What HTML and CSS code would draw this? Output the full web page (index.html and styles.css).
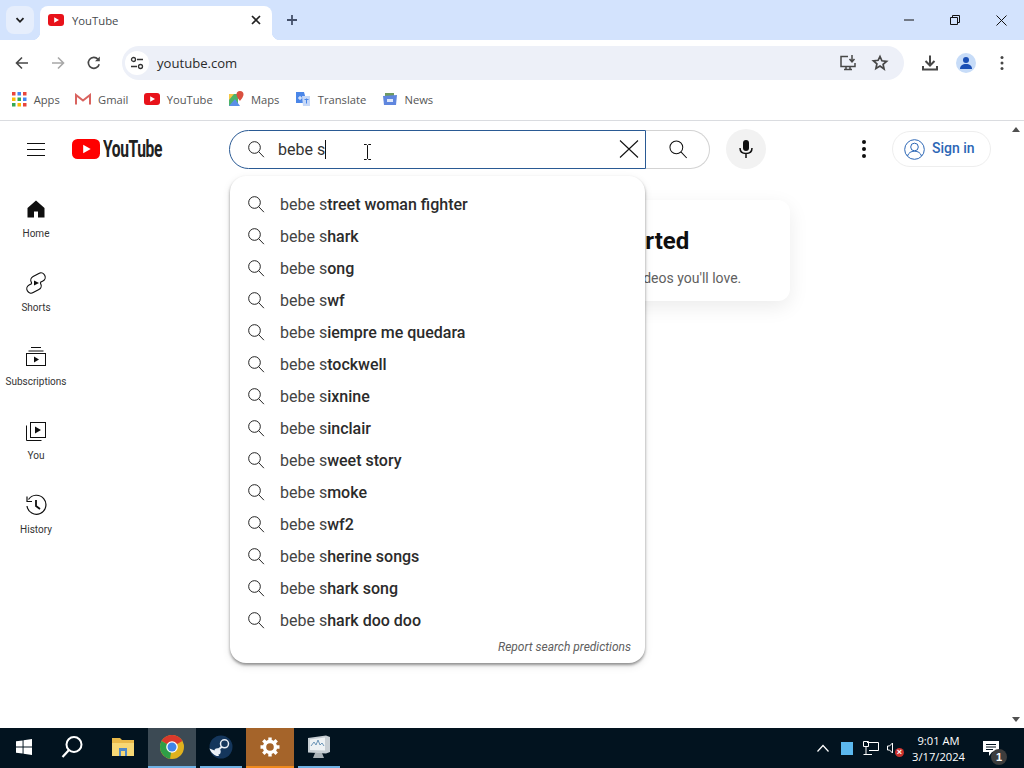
FILE: index.html
```html
<!DOCTYPE html>
<html lang="en">
<head>
<meta charset="utf-8">
<title>YouTube</title>
<link rel="stylesheet" href="styles.css">
</head>
<body>
<svg class="defs" width="0" height="0" aria-hidden="true">
  <symbol id="mag" viewBox="0 0 24 24"><path d="M10.2 3.2a7 7 0 1 0 0 14 7 7 0 0 0 0-14zM15.2 15.2l6.3 6.6" fill="none" stroke="currentColor" stroke-width="1.1"/></symbol>
  <symbol id="ytfav" viewBox="0 0 16 12"><rect width="16" height="12" rx="3" fill="#e8121a"/><path d="M6.2 3.2 11 6l-4.800 2.800z" fill="#fff"/></symbol>
</svg>

<div class="titlebar">
  <div class="tabsearch"><svg width="12" height="12" viewBox="0 0 12 12"><path d="M2.500 4.200 6 7.800l3.500-3.600" fill="none" stroke="#1f1f1f" stroke-width="1.800"/></svg></div>
  <div class="tab">
    <svg class="tabfav" width="16" height="12"><use href="#ytfav"/></svg>
    <span class="tabtitle">YouTube</span>
    <svg width="10" height="10" viewBox="0 0 10 10"><path d="M1 1l8 8M9 1l-8 8" stroke="#222" stroke-width="1.700"/></svg>
  </div>
  <div class="newtab"><svg width="12" height="12" viewBox="0 0 12 12"><path d="M6 1v10M1 6h10" stroke="#44506a" stroke-width="1.800"/></svg></div>
  <div class="winctl">
    <div class="winbtn"><svg width="10" height="10" viewBox="0 0 10 10"><path d="M0 5h10" stroke="#111" stroke-width="1"/></svg></div>
    <div class="winbtn"><svg width="10" height="10" viewBox="0 0 10 10"><path d="M.5 2.500h7v7h-7zM2.500 2.500v-2h7v7h-2" fill="none" stroke="#111"/></svg></div>
    <div class="winbtn"><svg width="11" height="11" viewBox="0 0 11 11"><path d="M.5.500l10 10M10.500.500l-10 10" stroke="#111"/></svg></div>
  </div>
</div>

<div class="toolbar">
  <div class="navbtn"><svg width="16" height="16" viewBox="0 0 16 16"><path d="M14 8H2.500M8 2.500 2.500 8 8 13.500" fill="none" stroke="#474747" stroke-width="1.600"/></svg></div>
  <div class="navbtn"><svg width="16" height="16" viewBox="0 0 16 16"><path d="M2 8h11.500M8 2.500 13.500 8 8 13.500" fill="none" stroke="#a8a8a8" stroke-width="1.600"/></svg></div>
  <div class="navbtn"><svg width="16" height="16" viewBox="0 0 16 16"><path d="M13.200 9.200A5.500 5.500 0 1 1 12 4.200" fill="none" stroke="#474747" stroke-width="1.600"/><path d="M13.800 1.500v4.800H9z" fill="#474747"/></svg></div>
  <div class="omnibox">
    <div class="siteinfo"><svg width="14" height="14" viewBox="0 0 14 14"><circle cx="3.500" cy="3.500" r="2" fill="none" stroke="#333" stroke-width="1.300"/><path d="M7 3.500h6M1 10.500h6" stroke="#333" stroke-width="1.400"/><circle cx="10.500" cy="10.500" r="2" fill="none" stroke="#333" stroke-width="1.300"/></svg></div>
    <span class="url">youtube.com</span>
    <div class="omniright">
      <svg width="18" height="18" viewBox="0 0 18 18"><path d="M9 2.500H2v10h14V9M5 15.500h8M7 13v2.500M11 13v2.500" fill="none" stroke="#474747" stroke-width="1.500"/><path d="M13 1v6M10.500 5 13 7.800 15.500 5" fill="none" stroke="#474747" stroke-width="1.500"/></svg>
      <svg width="18" height="18" viewBox="0 0 18 18"><path d="M9 2.500l1.900 4.300 4.700.5-3.500 3.100 1 4.600L9 12.100l-4.100 2.400 1-4.600-3.500-3.100 4.700-.5z" fill="none" stroke="#474747" stroke-width="1.700"/></svg>
    </div>
  </div>
  <div class="navbtn firstright"><svg width="18" height="18" viewBox="0 0 18 18"><path d="M9 1.500v9.500M4.500 7 9 11.500 13.500 7" fill="none" stroke="#474747" stroke-width="2"/><path d="M2 12v3.500h14V12" fill="none" stroke="#474747" stroke-width="2"/></svg></div>
  <div class="navbtn"><div class="avatar"><svg width="14" height="14" viewBox="0 0 14 14"><circle cx="7" cy="4" r="3" fill="#1b4fb5"/><path d="M1 13c0-3.500 2.500-5 6-5s6 1.500 6 5z" fill="#1b4fb5"/></svg></div></div>
  <div class="navbtn"><svg width="4" height="16" viewBox="0 0 4 16"><circle cx="2" cy="2.500" r="1.500" fill="#474747"/><circle cx="2" cy="8" r="1.500" fill="#474747"/><circle cx="2" cy="13.500" r="1.500" fill="#474747"/></svg></div>
</div>

<div class="bookmarks">
  <div class="bm"><svg width="15" height="15" viewBox="0 0 15 15"><g><rect x="0" y="0" width="3.500" height="3.500" fill="#e8453c"/><rect x="5.500" y="0" width="3.500" height="3.500" fill="#4285f4"/><rect x="11" y="0" width="3.500" height="3.500" fill="#e8453c"/><rect x="0" y="5.500" width="3.500" height="3.500" fill="#fbbc05"/><rect x="5.500" y="5.500" width="3.500" height="3.500" fill="#34a853"/><rect x="11" y="5.500" width="3.500" height="3.500" fill="#4285f4"/><rect x="0" y="11" width="3.500" height="3.500" fill="#34a853"/><rect x="5.500" y="11" width="3.500" height="3.500" fill="#fbbc05"/><rect x="11" y="11" width="3.500" height="3.500" fill="#e8453c"/></g></svg><span>Apps</span></div>
  <div class="bm"><svg width="16" height="12" viewBox="0 0 16 12"><path d="M1 11.500V2l7 5.500L15 2v9.500" fill="none" stroke="#d9635f" stroke-width="2"/></svg><span>Gmail</span></div>
  <div class="bm"><svg width="16" height="12"><use href="#ytfav"/></svg><span>YouTube</span></div>
  <div class="bm"><svg width="16" height="16" viewBox="0 0 16 16"><path d="M1 3h9v12H1z" fill="#4db36a"/><path d="M1 15l6-7 5 7z" fill="#5b8fe8"/><path d="M1 3h5L1 9z" fill="#f6c744"/><path d="M12 0a3.500 3.500 0 0 1 3.500 3.500C15.500 6 12 10 12 10S8.500 6 8.500 3.500A3.500 3.500 0 0 1 12 0z" fill="#d9503f"/></svg><span>Maps</span></div>
  <div class="bm"><svg width="16" height="16" viewBox="0 0 16 16"><path d="M1 1h8l3 11H1z" fill="#4a86e8"/><path d="M7 5h8v10H8z" fill="#c6d8f7"/><path d="M3 7h4M5 5v4" stroke="#fff" stroke-width="1"/><path d="M9.500 8.500h4M11.500 7.500v5" stroke="#4a86e8" stroke-width="1"/></svg><span>Translate</span></div>
  <div class="bm"><svg width="16" height="16" viewBox="0 0 16 16"><path d="M3 2h9v4H3z" fill="#6f9a62"/><path d="M1 5l14-1-1 10H2z" fill="#5f86de"/><rect x="5" y="8" width="6" height="3" fill="#dfe8fb"/></svg><span>News</span></div>
</div>

<div class="viewport">
  <div class="page">
    <header class="ythead">
      <div class="burger"><span></span><span></span><span></span></div>
      <div class="logo">
        <svg width="28" height="20" viewBox="0 0 28 20"><rect width="28" height="20" rx="5.500" fill="#f00"/><path d="M11.200 5.700 18.700 10l-7.500 4.300z" fill="#fff"/></svg>
        <span class="wordmark">YouTube</span>
      </div>
      <div class="search">
        <svg class="searchmag" width="20" height="20"><use href="#mag"/></svg>
        <span class="query">bebe s</span><span class="caret"></span>
        <svg class="clear" width="20" height="20" viewBox="0 0 20 20"><path d="M1 1.500l18 17M19 1.500l-18 17" stroke="#111" stroke-width="1.100"/></svg>
      </div>
      <div class="searchbtn"><svg width="22" height="22"><use href="#mag"/></svg></div>
      <div class="mic"><svg width="16" height="20" viewBox="0 0 16 20"><rect x="5" y="1" width="6" height="11" rx="3" fill="#0f0f0f"/><path d="M2 9c0 4 2.500 5.500 6 5.500s6-1.500 6-5.500M8 14.500V19" fill="none" stroke="#0f0f0f" stroke-width="1.500"/></svg></div>
      <div class="kebab"><i></i><i></i><i></i></div>
      <div class="signin">
        <svg width="21" height="21" viewBox="0 0 21 21"><g fill="none" stroke="#2b66b5" stroke-width="1"><circle cx="10.500" cy="10.500" r="9.800"/><circle cx="10.500" cy="8" r="3.800"/><path d="M3.500 17c1-3.200 3.500-4.800 7-4.800s6 1.600 7 4.800"/></g></svg>
        <span>Sign in</span>
      </div>
    </header>

    <div class="ytbody">
      <nav class="sidebar">
        <div class="navitem"><svg width="24" height="24" viewBox="0 0 24 24"><path d="M12 3.500 3.500 11v9.500h6.500v-6h4v6h6.500V11z" fill="#0f0f0f"/></svg><span>Home</span></div>
        <div class="navitem"><svg width="24" height="24" viewBox="0 0 24 24"><g stroke="#0f0f0f" stroke-width="2.300" fill="none"><rect x="7" y="4" width="14" height="7.500" rx="3.750" transform="rotate(-28 14 7.750)"/><rect x="3" y="12.500" width="14" height="7.500" rx="3.750" transform="rotate(-28 10 16.250)"/></g><g fill="#fff"><rect x="7" y="4" width="14" height="7.500" rx="3.750" transform="rotate(-28 14 7.750)"/><rect x="3" y="12.500" width="14" height="7.500" rx="3.750" transform="rotate(-28 10 16.250)"/><circle cx="12" cy="12" r="4"/></g><path d="M10 9.500 15 12l-5 2.500z" fill="#0f0f0f"/></svg><span>Shorts</span></div>
        <div class="navitem"><svg width="24" height="24" viewBox="0 0 24 24"><path d="M7 2.500h10M4.500 6h15" stroke="#0f0f0f" fill="none"/><rect x="2.500" y="8.500" width="19" height="12" fill="none" stroke="#0f0f0f"/><path d="M10 11.500l5 3-5 3z" fill="#0f0f0f"/></svg><span>Subscriptions</span></div>
        <div class="navitem"><svg width="24" height="24" viewBox="0 0 24 24"><rect x="6.500" y="3.500" width="15" height="15" fill="none" stroke="#0f0f0f"/><path d="M2.500 6.500v15h15" fill="none" stroke="#0f0f0f"/><path d="M11 7.500l6 3.500-6 3.500z" fill="#0f0f0f"/></svg><span>You</span></div>
        <div class="navitem"><svg width="24" height="24" viewBox="0 0 24 24"><path d="M4.500 6.500A9.500 9.500 0 1 1 3 13" fill="none" stroke="#0f0f0f" stroke-width="1.200"/><path d="M3 3.500v5h5" fill="none" stroke="#0f0f0f" stroke-width="1.200"/><path d="M12 7v6l4 3" fill="none" stroke="#0f0f0f" stroke-width="1.800"/></svg><span>History</span></div>
      </nav>
      <main class="feed">
        <section class="card">
          <h2>Try searching to get started</h2>
          <p>Start watching videos to help us build a feed of videos you'll love.</p>
        </section>
      </main>
    </div>

    <div class="dropdown">
      <div class="sug"><svg width="20" height="20"><use href="#mag"/></svg><span>bebe s<b>treet woman fighter</b></span></div>
      <div class="sug"><svg width="20" height="20"><use href="#mag"/></svg><span>bebe s<b>hark</b></span></div>
      <div class="sug"><svg width="20" height="20"><use href="#mag"/></svg><span>bebe s<b>ong</b></span></div>
      <div class="sug"><svg width="20" height="20"><use href="#mag"/></svg><span>bebe s<b>wf</b></span></div>
      <div class="sug"><svg width="20" height="20"><use href="#mag"/></svg><span>bebe s<b>iempre me quedara</b></span></div>
      <div class="sug"><svg width="20" height="20"><use href="#mag"/></svg><span>bebe s<b>tockwell</b></span></div>
      <div class="sug"><svg width="20" height="20"><use href="#mag"/></svg><span>bebe s<b>ixnine</b></span></div>
      <div class="sug"><svg width="20" height="20"><use href="#mag"/></svg><span>bebe s<b>inclair</b></span></div>
      <div class="sug"><svg width="20" height="20"><use href="#mag"/></svg><span>bebe s<b>weet story</b></span></div>
      <div class="sug"><svg width="20" height="20"><use href="#mag"/></svg><span>bebe s<b>moke</b></span></div>
      <div class="sug"><svg width="20" height="20"><use href="#mag"/></svg><span>bebe s<b>wf2</b></span></div>
      <div class="sug"><svg width="20" height="20"><use href="#mag"/></svg><span>bebe s<b>herine songs</b></span></div>
      <div class="sug"><svg width="20" height="20"><use href="#mag"/></svg><span>bebe s<b>hark song</b></span></div>
      <div class="sug"><svg width="20" height="20"><use href="#mag"/></svg><span>bebe s<b>hark doo doo</b></span></div>
      <div class="report">Report search predictions</div>
    </div>

    <svg class="ibeam" width="9" height="16" viewBox="0 0 9 16"><path d="M1 .500h2.500l1 1 1-1H8M4.500 1.500v13M1 15.500h2.500l1-1 1 1H8" fill="none" stroke="#111"/></svg>
  </div>
  <div class="scrollbar"><i class="up"></i><i class="down"></i></div>
</div>

<footer class="taskbar">
  <div class="tb"><svg width="16" height="16" viewBox="0 0 17 17"><path d="M0 2.500 7 1.500v6.500H0zM8 1.400 17 0v8H8zM0 9h7v6.500l-7-1zM8 9h9v8l-9-1.400z" fill="#fff"/></svg></div>
  <div class="tb finder"><svg width="24" height="24" viewBox="0 0 24 24"><circle cx="14" cy="9.500" r="7.500" fill="none" stroke="#fff" stroke-width="2"/><path d="M9 15 2.500 22" stroke="#fff" stroke-width="2.200"/></svg></div>
  <div class="tb files"><svg width="22" height="20" viewBox="0 0 22 20"><path d="M0 1h8l2 2h12v16H0z" fill="#e9b949"/><path d="M0 6h22v13H0z" fill="#f7d774"/><rect x="7" y="11" width="8" height="8" fill="#4f87c7"/><rect x="9" y="14" width="4" height="5" fill="#f7d774"/></svg></div>
  <div class="tb chrome active"><svg width="24" height="24" viewBox="0 0 24 24"><circle cx="12" cy="12" r="12" fill="#e0b11e"/><path d="M12 12 1.600 6A12 12 0 0 1 22.400 6z" fill="#d9392c"/><path d="M12 12 1.600 6A12 12 0 0 0 10 23.800z" fill="#2f9e47"/><circle cx="12" cy="12" r="5.800" fill="#fff"/><circle cx="12" cy="12" r="4.500" fill="#3f84e8"/></svg></div>
  <div class="tb steam running"><svg width="24" height="24" viewBox="0 0 24 24"><circle cx="12" cy="12" r="11.500" fill="#14365c"/><path d="M.5 13.500 8 16.500l2 4.500c-4 .5-8-3-9.500-7.500z" fill="#f2f5f8"/><circle cx="15.500" cy="8.800" r="4" fill="none" stroke="#e8eef5" stroke-width="1.500"/><circle cx="8.500" cy="16.500" r="3.200" fill="#e8eef5"/><path d="M9 15l4-3.500" stroke="#e8eef5" stroke-width="2"/></svg></div>
  <div class="tb settings"><svg width="20" height="20" viewBox="0 0 20 20"><circle cx="10" cy="10" r="5.500" fill="none" stroke="#fff" stroke-width="3.400"/><g stroke="#fff" stroke-width="3.400"><path d="M10 .500v3.500M10 16v3.500M.5 10H4M16 10h3.500M3.300 3.300l2.500 2.500M14.200 14.200l2.500 2.500M16.700 3.300l-2.500 2.500M5.800 14.200l-2.500 2.500"/></g></svg></div>
  <div class="tb monitor running"><svg width="24" height="24" viewBox="0 0 24 24"><path d="M1 3 19 .5 23 2v15l-4 1.500-18-1z" fill="#c7ced3"/><path d="M3 4.500l15-2v13L3 15z" fill="#eef2f4"/><path d="M4 11l3-4 2 3 2-5 2 5 2-2 2 3" fill="none" stroke="#6c96b8"/><path d="M8 18h7l2 5H6z" fill="#a9b1b6"/></svg></div>

  <div class="tray">
    <svg class="chev" width="12" height="8" viewBox="0 0 12 8"><path d="M.5 7.500 6 1.500l5.500 6" fill="none" stroke="#fff" stroke-width="1.200"/></svg>
    <div class="bluebox"></div>
    <svg class="net" width="16" height="14" viewBox="0 0 16 14"><g fill="none" stroke="#fff"><path d="M4 1.500h11.500v8H6"/><path d="M.5.500h5v5h-5zM3 5.500v8M.5 13.500H9"/></g></svg>
    <span class="vol"><svg width="8" height="12" viewBox="0 0 8 12"><path d="M.5 4h2l3-3v10l-3-3h-2z" fill="none" stroke="#fff"/></svg><i>×</i></span>
    <div class="clock"><span>9:01 AM</span><span>3/17/2024</span></div>
    <div class="notif"><svg width="16" height="15" viewBox="0 0 16 15"><path d="M0 0h16v11H9l-3 4v-4H0z" fill="#fff"/><path d="M3 3.500h10M3 6h10M3 8.500h7" stroke="#02131f"/></svg><b>1</b></div>
  </div>
</footer>
</body>
</html>
```

FILE: styles.css
```css
* { box-sizing: border-box; }
html, body { margin: 0; height: 100%; }
body {
  width: 1024px;
  height: 768px;
  overflow: hidden;
  display: flex;
  flex-direction: column;
  background: #fff;
  font-family: "Roboto", "Liberation Sans", sans-serif;
  color: #0f0f0f;
}
svg { display: block; flex: none; }
.defs { position: absolute; }

/* browser frame */
.titlebar {
  height: 40px;
  flex: none;
  display: flex;
  align-items: flex-end;
  padding-left: 6px;
  background: #d3e3fd;
}
.tabsearch {
  width: 28px;
  height: 28px;
  align-self: flex-start;
  margin-top: 6px;
  border-radius: 8px;
  background: #e6eefc;
  display: flex;
  align-items: center;
  justify-content: center;
}
.tab {
  position: relative;
  width: 232px;
  height: 34px;
  margin-left: 6px;
  padding: 0 11px 6px 8px;
  display: flex;
  align-items: center;
  background: #fff;
  border-radius: 8px 8px 0 0;
}
.tab::before, .tab::after {
  content: "";
  position: absolute;
  bottom: 0;
  width: 8px;
  height: 8px;
}
.tab::before { left: -8px; background: radial-gradient(circle at 0 0, transparent 8px, #fff 8.500px); }
.tab::after { right: -8px; background: radial-gradient(circle at 100% 0, transparent 8px, #fff 8.500px); }
.tabtitle {
  flex: 1;
  margin-left: 8px;
  font: 11.300px "Open Sans", "Liberation Sans", sans-serif;
  color: #45494d;
}
.newtab {
  width: 28px;
  height: 28px;
  margin: 0 0 6px 6px;
  display: flex;
  align-items: center;
  justify-content: center;
}
.winctl { margin-left: auto; align-self: stretch; display: flex; }
.winbtn { width: 46px; display: flex; align-items: center; justify-content: center; }

.toolbar {
  height: 40px;
  flex: none;
  padding: 6px 4px 0;
  display: flex;
  align-items: stretch;
  background: #fff;
}
.navbtn { width: 36px; display: flex; align-items: center; justify-content: center; }
.firstright { margin-left: 8px; }
.omnibox {
  flex: 1;
  margin-left: 10px;
  padding: 0 15px 0 3px;
  display: flex;
  align-items: center;
  border-radius: 17px;
  background: #edf0f8;
}
.siteinfo {
  width: 24px;
  height: 24px;
  border-radius: 50%;
  background: #fff;
  display: flex;
  align-items: center;
  justify-content: center;
}
.url { margin-left: 8px; font: 13.100px "Open Sans", "Liberation Sans", sans-serif; color: #2a2a2a; }
.omniright { margin-left: auto; display: flex; gap: 14px; }
.avatar {
  width: 20px;
  height: 20px;
  border-radius: 50%;
  background: #c7dcf8;
  display: flex;
  align-items: center;
  justify-content: center;
}
.bookmarks {
  height: 41px;
  flex: none;
  padding: 0 12px 2px;
  display: flex;
  align-items: center;
  gap: 15.600px;
  background: #fff;
  border-bottom: 1px solid #dadce0;
}
.bm {
  display: flex;
  align-items: center;
  gap: 6.700px;
  font: 11.200px "Open Sans", "Liberation Sans", sans-serif;
  color: #555;
}

/* page */
.viewport { flex: 1; min-height: 0; display: flex; }
.page { position: relative; flex: 1; min-width: 0; display: flex; flex-direction: column; }
.scrollbar {
  width: 16px;
  flex: none;
  padding: 6px 4px 6px;
  display: flex;
  flex-direction: column;
  justify-content: space-between;
  align-items: center;
}
.scrollbar i { width: 0; height: 0; border-left: 4px solid transparent; border-right: 4px solid transparent; }
.scrollbar .up { border-bottom: 5px solid #505050; }
.scrollbar .down { border-top: 5px solid #505050; }

.ythead { height: 56px; flex: none; display: flex; align-items: center; }
.burger {
  width: 18px;
  margin-left: 27px;
  display: flex;
  flex-direction: column;
  gap: 5px;
}
.burger span { height: 1px; background: #0f0f0f; }
.logo { margin-left: 27px; width: 157px; display: flex; align-items: center; gap: 3px; }
.wordmark {
  display: inline-block;
  font: 700 24px/20px "Roboto", sans-serif;
  letter-spacing: -.6px;
  color: #212121;
  transform: scaleX(.65);
  transform-origin: 0 50%;
}
.search {
  width: 417px;
  height: 39px;
  padding: 0 6px 0 16px;
  display: flex;
  align-items: center;
  border: 1px solid #2a5a94;
  border-radius: 20px 0 0 20px;
}
.searchmag { color: #0f0f0f; }
.query { margin-left: 12px; font-size: 16px; color: #333; }
.caret { width: 1px; height: 19px; background: #0f0f0f; }
.clear { margin-left: auto; }
.searchbtn {
  width: 64px;
  height: 39px;
  display: flex;
  align-items: center;
  justify-content: center;
  border: 1px solid #d3d3d3;
  border-left: 0;
  border-radius: 0 20px 20px 0;
}
.mic {
  width: 40px;
  height: 40px;
  margin-left: 16px;
  border-radius: 50%;
  background: #f2f2f2;
  display: flex;
  align-items: center;
  justify-content: center;
}
.kebab {
  margin-left: 96px;
  width: 4px;
  display: flex;
  flex-direction: column;
  gap: 3px;
}
.kebab i { width: 4px; height: 4px; border-radius: 50%; background: #0f0f0f; }
.signin {
  width: 99px;
  height: 36px;
  margin-left: 26px;
  padding-left: 11px;
  display: flex;
  align-items: center;
  gap: 7px;
  border: 1px solid #eee;
  border-radius: 18px;
  font-size: 14px;
  font-weight: 500;
  color: #2b66b5;
}
.signin span { margin-bottom: 2px; }
.ytbody { flex: 1; min-height: 0; display: flex; }
.sidebar { width: 72px; flex: none; padding-top: 4px; display: flex; flex-direction: column; }
.navitem {
  height: 74px;
  padding-top: 16px;
  display: flex;
  flex-direction: column;
  align-items: center;
  gap: 6px;
  font-size: 10px;
  line-height: 14px;
  color: #333;
}
.feed { flex: 1; min-width: 0; padding-top: 23px; display: flex; justify-content: center; align-items: flex-start; }
.card {
  width: 500px;
  height: 101px;
  padding-top: 25px;
  text-align: center;
  border-radius: 12px;
  background: #fff;
  box-shadow: 0 6px 20px rgba(0,0,0,.08);
}
.card h2 { margin: 0; font-size: 24px; line-height: 32px; font-weight: 700; color: #0f0f0f; }
.card p { margin: 11px 0 0; font-size: 14px; line-height: 20px; color: #606060; }

.dropdown {
  position: absolute;
  left: 230px;
  top: 55px;
  width: 415px;
  height: 487px;
  padding-top: 12px;
  border-radius: 16px;
  background: #fff;
  box-shadow: 0 2px 3px rgba(0,0,0,.4), 0 3px 8px rgba(0,0,0,.1);
}
.sug {
  height: 32px;
  padding-left: 16px;
  display: flex;
  align-items: center;
  gap: 14px;
  font-size: 16px;
  color: #444;
}
.sug svg { color: #0f0f0f; }
.sug b { font-weight: 500; color: #2b2b2b; }
.report {
  margin-top: 3px;
  padding-right: 14px;
  text-align: right;
  font-size: 12px;
  line-height: 16px;
  font-style: italic;
  color: #606060;
}
.ibeam { position: absolute; left: 363px; top: 23px; }

/* taskbar */
.taskbar {
  height: 40px;
  flex: none;
  display: flex;
  align-items: stretch;
  background: #02131f;
}
.tb { width: 48px; display: flex; align-items: center; justify-content: center; margin-right: 1px; border-bottom: 2px solid transparent; }
.finder svg { margin-right: 2px; }
.files { margin-left: 1px; }
.active { background: #3c4a54; border-bottom-color: #6fb1e4; }
.settings { background: #a5642a; border-bottom-color: #f08a1d; }
.running { border-image: linear-gradient(to right, transparent 4px, #6fb1e4 4px, #6fb1e4 44px, transparent 44px) 1; }
.tray {
  margin-left: auto;
  display: flex;
  align-items: center;
  color: #fff;
}
.chev { margin-right: 12px; }
.bluebox { width: 12px; height: 13px; margin-right: 10px; background: #5bb8ee; }
.net { margin-right: 8px; }
.vol { position: relative; width: 13px; }
.vol i {
  position: absolute;
  left: 8px;
  top: 6px;
  width: 9px;
  height: 9px;
  border-radius: 50%;
  background: #c9302c;
  font: 700 9px/9px "Liberation Sans", sans-serif;
  text-align: center;
  color: #fff;
}
.clock {
  width: 76px;
  margin-right: 7px;
  padding-left: 1px;
  display: flex;
  flex-direction: column;
  align-items: center;
  gap: 1px;
  font: 11.200px/15px "Open Sans", "Liberation Sans", sans-serif;
  color: #fff;
}
.notif { position: relative; width: 32px; margin-right: 9px; }
.notif b {
  position: absolute;
  left: 8px;
  top: 8px;
  width: 16px;
  height: 16px;
  border-radius: 50%;
  background: #3d3d3d;
  font: 700 11px/16px "Liberation Sans", sans-serif;
  text-align: center;
  color: #fff;
}
```
